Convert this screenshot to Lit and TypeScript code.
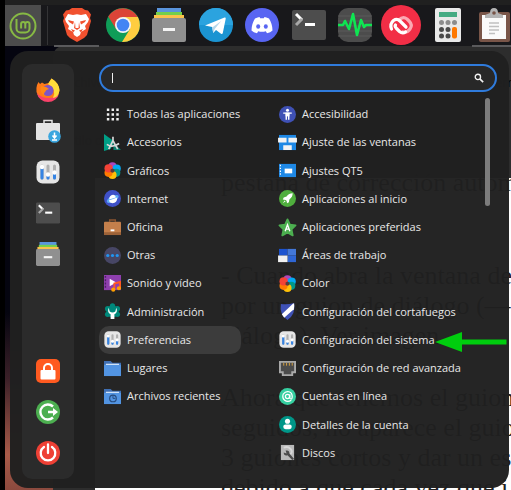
import { LitElement, html, css, svg, nothing, SVGTemplateResult } from "lit";
import { customElement, property } from "lit/decorators.js";

type Art = { box: number; art: SVGTemplateResult };

const sliders = svg`<rect x=".5" y=".5" width="23" height="23" rx="6" fill="#e6e6e6"/>
  <g stroke-width="3" stroke-linecap="round"><path d="M6 6v12M12 6v12M18.500 6v12" stroke="#b0b0b0"/>
  <path d="M6 8v10M12 16v2M18.500 14v4" stroke="#3584e4"/></g>
  <g fill="#fff"><circle cx="6" cy="7" r="2.200"/><circle cx="12" cy="14.500" r="2.200"/><circle cx="18.500" cy="12.500" r="2.200"/></g>`;
const terminal = svg`<rect y="2" width="34" height="30" rx="2" fill="#4d4d4d"/>
  <path d="M4 6l6 6" stroke="#fff" stroke-width="3" fill="none"/><path d="M10 11l-6 6" stroke="#a8a8a8" stroke-width="3"/>
  <rect x="13" y="15" width="10" height="3" fill="#fff"/>`;
const cabinet = svg`<path d="M5 0h24v6H5z" fill="#5a95dd"/><path d="M4 4h26v5H4z" fill="#73cf4c"/>
  <path d="M2 7h30v6H2z" fill="#fbc24a"/><rect y="10" width="34" height="24" rx="2" fill="#909090"/>
  <rect x="11" y="20" width="12" height="3" fill="#f4f4f4"/>`;
const petals = svg`<circle cx="9" cy="4.500" r="4.300" fill="#ab47bc"/><circle cx="13.500" cy="7" r="4.300" fill="#03a9f4"/>
  <circle cx="13" cy="11.500" r="4.300" fill="#009688"/><circle cx="9" cy="13.700" r="4.300" fill="#ffc107"/>
  <circle cx="4.800" cy="11.500" r="4.300" fill="#ff7a00"/><circle cx="4.800" cy="6.800" r="4.300" fill="#f44336"/>
  <path d="M9 7l2 1v2.500L9 11.500l-2-1V8z" fill="#5a3a3a"/>`;
const folder = svg`<path d="M0 1h7l2 2h9v5H0z" fill="#3f6fb3"/><path d="M2 4h14v3H2z" fill="#fff"/><path d="M0 5h18v12H0z" fill="#5294e2"/>`;

const ART: Record<string, Art> = {
  mint: { box: 28, art: svg`<circle cx="14" cy="14" r="12.500" fill="none" stroke="#87b944" stroke-width="2"/>
    <path d="M7.500 7v9.500a4 4 0 0 0 4 4h5a4 4 0 0 0 4-4V12a2.100 2.100 0 0 0-4.200 0V16.500M16.300 12a2.100 2.100 0 0 0-4.200 0V16.500" fill="none" stroke="#87b944" stroke-width="2"/>` },
  brave: { box: 34, art: svg`<path d="M9 2l3-2h10l3 2 3 .5 3 4-1 3.500 1 3-4 14-3 3-7 4-7-4-3-3L3 13l1-3-1-3.500 3-4z" fill="#f1512f"/>
    <path d="M8 6l5 1 4-.800 4 .800 5-1 3 5-1 3-3 4 1 3-5 3-1 3-3 2-3-2-1-3-5-3 1-3-3-4-1-3z" fill="#fff"/>
    <path d="M8 12l6 1.500-1 3-4-2.500zM26 12l-6 1.500 1 3 4-2.500zM15 14l-1 6 3 2 3-2-1-6M11 21l4 1.500-2 2zM23 21l-4 1.500 2 2z" fill="#f1512f"/><path d="M15 14h4l-.5 6h-3z" fill="#fff"/>` },
  chrome: { box: 34, art: svg`<circle cx="17" cy="17" r="17" fill="#0f9d58"/>
    <path d="M2.300 8.500L10 21l7-12h14.700A17 17 0 0 0 2.300 8.500z" fill="#db4437"/>
    <path d="M17 9h14.900A17 17 0 0 1 17 34h-1l8-13z" fill="#ffcd40"/><circle cx="17" cy="17" r="8" fill="#f4f4f4"/><circle cx="17" cy="17" r="6.300" fill="#4285f4"/>` },
  cabinet: { box: 34, art: cabinet },
  telegram: { box: 34, art: svg`<circle cx="17" cy="17" r="17" fill="#1b94d2"/><path d="M0 17a17 17 0 0 1 34 0z" fill="#2ba3df"/>
    <path d="M6 17.500L25.500 9.500q1.500-.3 1.200 1.300L23.800 25q-.4 1.500-1.800.7L17 22l-2.800 3-1-6z" fill="#fff"/><path d="M13.200 19.500l9-6.500-6.500 8-1.500 4z" fill="#b5d7ea"/>` },
  discord: { box: 34, art: svg`<circle cx="17" cy="17" r="17" fill="#5865f2"/>
    <path d="M10 10.500q3-1.500 4.500-1.500l.7 1.300q1.800-.3 3.600 0l.7-1.300q1.500 0 4.500 1.500 3.500 5.500 3.500 12-2 2-5.500 2.700l-1.200-2q-3.800 1-7.600 0l-1.200 2q-3.500-.7-5.500-2.700 0-6.500 3.500-12z" fill="#fff"/>
    <ellipse cx="13.200" cy="18.500" rx="2" ry="2.300" fill="#5865f2"/><ellipse cx="20.800" cy="18.500" rx="2" ry="2.300" fill="#5865f2"/>` },
  terminal: { box: 34, art: terminal },
  monitor: { box: 34, art: svg`<rect width="34" height="34" rx="10" fill="#4c4c4c"/>
    <path d="M0 8h34M0 13h34M0 18h34M0 23h34M0 28h34" stroke="#5a5a5a"/>
    <path d="M0 17h5l2-4 4 8 4-15 4 21 4-15 3 7 2-2h6" fill="none" stroke="#0fe552" stroke-width="2.600" stroke-linejoin="round"/>` },
  authy: { box: 40, art: svg`<circle cx="20" cy="20" r="20" fill="#f22e46"/>
    <g fill="none" stroke-width="3.200" stroke-linecap="round"><path d="M18 15q4-4 8-1l2 2q4 4 1 8-3 4-7 3" stroke="#fba9b3"/>
    <path d="M10.500 24q-2-5 2-8.500 3.500-2.500 6.500.5l6 6M14.500 20q-1 1.500 1 3.500l3 3q3 2.500 6 .5" stroke="#fff"/></g>` },
  calc: { box: 34, art: svg`<rect x="4" width="26" height="34" rx="2" fill="#e9e9e9"/><path d="M8 4h18v5H8z" fill="#45ab83"/>
    <g fill="#8c8c8c"><circle cx="10.500" cy="14.500" r="2.500"/><circle cx="17" cy="14.500" r="2.500"/><circle cx="23.500" cy="14.500" r="2.500"/></g>
    <g fill="#4a4a4a"><circle cx="10.500" cy="21.500" r="2.500"/><circle cx="17" cy="21.500" r="2.500"/><circle cx="10.500" cy="28" r="2.500"/><circle cx="17" cy="28" r="2.500"/></g>
    <rect x="21" y="19" width="5" height="11.500" rx="2" fill="#ff7800"/>` },
  clipboard: { box: 34, art: svg`<rect x="2" y="4" width="31" height="30" rx="2" fill="#795548"/><path d="M5 7h24v24H5z" fill="#fafafa"/>
    <path d="M8 10V7l5-2q0-5 4-5t4 5l5 2v3z" fill="#b4b4b4"/><circle cx="17" cy="5" r="1.800" fill="#795548"/>
    <path d="M12 15h10M12 18.500h10M12 22h10M12 25.500h6" stroke="#c0c0c0" stroke-width="1.500"/>` },
  firefox: { box: 24, art: svg`<path d="M1 7l1.500-3L4 6l2-1.500L8.500 6l4-1L15.500.5Q23 5 23.500 12.500A11.700 11.700 0 0 1 .5 14Q0 10 1 7z" fill="#ff7a1a"/>
    <path d="M.8 15A11.500 11.500 0 0 0 23.300 15Q20 20 13 20 5 20 .8 15z" fill="#f9426a"/>
    <path d="M15.500.5Q23 5 23.500 12 23 19 17 20 21 11 12 6z" fill="#ffdc3a"/><circle cx="12" cy="12.500" r="5.500" fill="#7c55c8"/>
    <path d="M5 8l5 1 3 2q-3 .5-4 3-2 2 0 4-6-3-4-10z" fill="#ff8a16"/>` },
  software: { box: 24, art: svg`<path d="M8 4V1.500h8V4" fill="none" stroke="#e4e4e4" stroke-width="1.500"/><rect y="4" width="24" height="17" rx="1" fill="#e4e4e4"/>
    <circle cx="18.500" cy="17.500" r="6.300" fill="#3aa6df"/><path d="M18.500 13.500v4m-2-1l2 2.500 2-2.500M16 21h5" stroke="#fff" stroke-width="1.500" fill="none"/>` },
  sliders: { box: 24, art: sliders },
  lock: { box: 24, art: svg`<rect width="24" height="24" rx="5" fill="#ff5a20"/><path d="M8 12V9a4 4 0 0 1 8 0v3" fill="none" stroke="#fff" stroke-width="2"/><rect x="4.500" y="11" width="15" height="9.500" rx="1" fill="#fff"/>` },
  logout: { box: 24, art: svg`<circle cx="12" cy="12" r="12" fill="#4caf50"/><path d="M17 6.500a7.500 7.500 0 1 0 0 11M12 12h7" fill="none" stroke="#fff" stroke-width="2.400"/><path d="M17 8l5 4-5 4z" fill="#fff"/>` },
  power: { box: 24, art: svg`<circle cx="12" cy="12" r="12" fill="#ee4035"/><path d="M8 6a7.300 7.300 0 1 0 8 0M12 3.500v8.500" fill="none" stroke="#fff" stroke-width="2.300" stroke-linecap="round"/>` },
  grid: { box: 18, art: svg`<path d="M3 4h13M3 9h13M3 14h13" stroke="#f0f0f0" stroke-width="2.600" stroke-dasharray="2.600 2.400"/>` },
  accessories: { box: 18, art: svg`<path d="M0 0l11 8-4 8-7 2z" fill="#009e86"/><path d="M10 17h8l-8-8z" fill="#0b8070"/><path d="M9.500 3v4L5 16M9.500 7l5 9M3 11q6 4 13-1" stroke="#d7d7d7" stroke-width="1.800" fill="none"/>` },
  petals: { box: 18, art: petals },
  internet: { box: 18, art: svg`<circle cx="9" cy="9" r="9" fill="#3f51c8"/><ellipse cx="9" cy="9.500" rx="7" ry="3" transform="rotate(-28 9 9)" fill="#5ca9f5"/><path d="M5.500 10q0-4.500 4-5 3 .5 3 3z" fill="#fff"/><path d="M5 11l9-3q0 6-5 6-3-.5-4-3z" fill="#fff"/>` },
  office: { box: 18, art: svg`<path d="M6 3V1h6v2" fill="none" stroke="#8b5430" stroke-width="1.500"/><rect y="3" width="18" height="14" rx="1" fill="#c47f4b"/><path d="M0 14h18v3H0z" fill="#9c6238"/><rect x="7" y="11" width="4" height="2" fill="#fff"/>` },
  others: { box: 18, art: svg`<circle cx="9" cy="9" r="9" fill="#474665"/><circle cx="4" cy="9" r="1.700" fill="#2196f3"/><circle cx="9" cy="9" r="1.700" fill="#2196f3"/><circle cx="14" cy="9" r="1.700" fill="#2196f3"/>` },
  media: { box: 18, art: svg`<path d="M0 0h18v16H0z" fill="#8e3fae"/><path d="M1.500 1v14" stroke="#4f1e66" stroke-width="1.500" stroke-dasharray="2 1.500"/><path d="M6 4l7 4-7 4z" fill="#fff"/><path d="M11 15.500V9l6-1.500V14" fill="none" stroke="#ff5722" stroke-width="2"/><circle cx="9.800" cy="15.500" r="2.200" fill="#ffa000"/><circle cx="15.800" cy="14" r="2.200" fill="#ffa000"/>` },
  admin: { box: 18, art: svg`<g fill="#00897b"><circle cx="9" cy="9" r="6.500"/><circle cx="9" cy="3" r="2.800"/><circle cx="3.800" cy="6" r="2.800"/><circle cx="14.200" cy="6" r="2.800"/><circle cx="3.800" cy="12" r="2.800"/><circle cx="14.200" cy="12" r="2.800"/></g><path d="M5 5q-2 5 2 7v5h4v-5q4-2 2-7l-1 4q-3 2-6 0z" fill="#fff"/>` },
  folder: { box: 18, art: folder },
  recent: { box: 18, art: svg`${folder}<circle cx="9.500" cy="11" r="3.500" fill="none" stroke="#274b7d" stroke-width="1.200"/><path d="M9.500 8v3h2.500" stroke="#274b7d" fill="none"/>` },
  access: { box: 18, art: svg`<circle cx="9" cy="9" r="9" fill="#3f51b5"/><circle cx="9" cy="4.500" r="1.600" fill="#fff"/><path d="M4.500 7.500h9M7.700 7.500v7M10.300 7.500v7" stroke="#fff" stroke-width="1.500"/><path d="M7 7h4v4H7z" fill="#fff"/>` },
  windows: { box: 18, art: svg`<path d="M0 1h18v16H0z" fill="#1e88e5"/><path d="M-1 4h9v5h-9zM10 4h9v5h-9zM4.500 12h9v5h-9z" fill="#f2f2f2"/>` },
  qt: { box: 18, art: svg`<path d="M0 2h18v14H0z" fill="#1e88e5"/><path d="M1.500 3v12" stroke="#fff" stroke-width="1.200" stroke-dasharray="1.500 1.500"/><path d="M6 7h8v5H6z" fill="#fff"/>` },
  rocket: { box: 18, art: svg`<circle cx="9" cy="9" r="9" fill="#4fae3d"/><path d="M14.500 3.500q-4 0-6.500 3.500l-3 1L4 10l3 .5 1 1L8.500 14l2-1 .5-3q3.500-2.500 3.500-6.500z" fill="#fff"/><path d="M4 14l2-3 1 1z" fill="#fff"/>` },
  star: { box: 18, art: svg`<path d="M9 .5l2.500 5.500 6 .8-4.300 4.200 1.300 6.300L9 14.200l-5.500 3.100L4.800 11 .5 6.800l6-.8z" fill="#4caf50" stroke="#4caf50" stroke-width="2" stroke-linejoin="round"/><path d="M6.500 13L9 6l2.500 7M7.500 10.700h3" fill="none" stroke="#fff" stroke-width="1.400"/>` },
  spaces: { box: 18, art: svg`<path d="M0 2h9v7H0z" fill="#1c53cf"/><path d="M9 2h9v7H9z" fill="#4377d8"/><path d="M9 9h9v7H9z" fill="#2f66d4"/><path d="M-1 9h10v7H-1z" fill="#f0f0f0"/>` },
  shield: { box: 18, art: svg`<path d="M2 1q7 1 14-1 2 12-7 18Q0 12 2 1z" fill="#3f51b5"/><path d="M3 12L15 .5l1 0q.5 3-.3 6L5.500 15.500z" fill="#fff"/>` },
  network: { box: 18, art: svg`<path d="M0 1h18v13h-3v3H3v-3H0z" fill="#a8a8a8"/><path d="M2 3h14v9h-3v3H5v-3H2z" fill="#4b4b4b"/><path d="M5 3v3M8 3v3M11 3v3M14 3v3" stroke="#d9a441"/>` },
  online: { box: 18, art: svg`<circle cx="9" cy="9" r="9" fill="#36cfa0"/><path d="M13 13q-4 2.500-7 0T4.500 6.500Q7 3 10.500 4t3.500 5-2.500 2V6.500" fill="none" stroke="#fff" stroke-width="1.300"/><circle cx="9" cy="9" r="2.200" fill="none" stroke="#fff" stroke-width="1.300"/>` },
  account: { box: 18, art: svg`<circle cx="9" cy="9" r="9" fill="#009688"/><circle cx="9" cy="5.500" r="2.700" fill="#fff"/><rect x="4.500" y="9" width="9" height="5" rx="2.500" fill="#fff"/>` },
  disks: { box: 18, art: svg`<path d="M2 1h14v16H2z" fill="#b9b9b9"/><path d="M5 4q4-2 7 1t0 6" fill="none" stroke="#d8d8d8" stroke-width="2"/><path d="M7 7q4-1 4 3l5 6-2 1-5-5q-4 1-4-3l3 1z" fill="#4b4b4b"/>` },
  search: { box: 18, art: svg`<circle cx="7" cy="7" r="4.800" fill="none" stroke="#f2f2f2" stroke-width="2.400"/><path d="M10.500 10.500l6 6" stroke="#f2f2f2" stroke-width="3"/>` },
};

@customElement("app-icon")
export class AppIcon extends LitElement {
  @property() name = "";
  static styles = css`
    :host { display: block; flex: none; }
    svg { display: block; width: 100%; height: 100%; overflow: visible; }
  `;
  render() {
    const icon = ART[this.name];
    return icon ? html`<svg viewBox="0 0 ${icon.box} ${icon.box}" aria-hidden="true">${icon.art}</svg>` : nothing;
  }
}

const TASKS = [
  ["brave", "Brave"], ["chrome", "Chrome"], ["cabinet", "Archivos"], ["telegram", "Telegram"], ["discord", "Discord"],
  ["terminal", "Terminal"], ["monitor", "Monitor"], ["authy", "Authy"], ["calc", "Calculadora"], ["clipboard", "Portapapeles"],
];
const FAVORITES = [["firefox", "Firefox"], ["software", "Software"], ["sliders", "Configuración"], ["terminal", "Terminal"], ["cabinet", "Archivos"]];
const SESSION = [["lock", "Bloquear"], ["logout", "Cerrar sesión"], ["power", "Apagar"]];
const CATEGORIES = [
  ["grid", "Todas las aplicaciones"], ["accessories", "Accesorios"], ["petals", "Gráficos"], ["internet", "Internet"],
  ["office", "Oficina"], ["others", "Otras"], ["media", "Sonido y vídeo"], ["admin", "Administración"],
  ["sliders", "Preferencias"], ["folder", "Lugares"], ["recent", "Archivos recientes"],
];
const APPS = [
  ["access", "Accesibilidad"], ["windows", "Ajuste de las ventanas"], ["qt", "Ajustes QT5"], ["rocket", "Aplicaciones al inicio"],
  ["star", "Aplicaciones preferidas"], ["spaces", "Áreas de trabajo"], ["petals", "Color"], ["shield", "Configuración del cortafuegos"],
  ["sliders", "Configuración del sistema"], ["network", "Configuración de red avanzada"], ["online", "Cuentas en línea"],
  ["account", "Detalles de la cuenta"], ["disks", "Discos"],
];

@customElement("app-root")
export class AppRoot extends LitElement {
  static styles = css`
    :host {
      display: flex; flex-direction: column; position: relative; min-height: 100vh; box-sizing: border-box;
      overflow: hidden; isolation: isolate; padding-left: 5px; background: #000; color: #e8e8e8;
      font: 11px/16px "Open Sans", "Noto Sans", sans-serif;
    }
    button { border: 0; margin: 0; padding: 0; background: none; color: inherit; font: inherit; display: flex; align-items: center; }
    .taskbar { display: flex; height: 41px; border-top: 5px solid #202020; background: #18181b; flex: none; }
    .start { width: 36px; justify-content: center; background: #4c4c4c; }
    .start app-icon { width: 28px; height: 28px; }
    .divider { width: 1px; margin: 1px 6px 1px; background: #343436; }
    .tasks { flex: 1; display: grid; grid-template-columns: repeat(10, 1fr); margin-right: -7px; }
    .task { justify-content: center; border-bottom: 2px solid transparent; margin-right: 1px; }
    .task.open { border-color: #5a5a5c; }
    .task app-icon { width: 34px; height: 34px; }
    .task .authy { width: 40px; height: 40px; }

    .backdrop { position: absolute; inset: 46px 0 0 5px; z-index: -1; overflow: hidden; display: flex;
      background: linear-gradient(#050510 0 60%, #3b2028 75%, #a85a48 92%, #8c4a3e); }
    .window { flex: 1; min-width: 0; margin-left: 48px; border-radius: 10px 0 0; background: #2d2d2d; overflow: hidden; white-space: nowrap; }
    .menubar, .style { display: flex; gap: 14px; padding: 27px 0 0 9px; height: 20px; font-size: 12px; line-height: 20px; color: #000; }
    .style { padding-top: 38px; height: 37px; }
    .page { margin-left: 42px; padding-left: 126px; background: linear-gradient(#2d2d2d 10px, #fff 10px); color: #222; font: 26px/30px "Liberation Serif", serif; }
    .page p { margin: 0 0 32px; }
    .page .first { margin-bottom: 63px; }

    .menu { flex: 1; display: flex; gap: 25px; margin: 5px 2px 2px 5px; padding: 13px 12px 9px; border-radius: 18px; background: rgba(32, 32, 32, 0.975); }
    .side { width: 52px; display: flex; flex-direction: column; align-items: stretch; padding: 5px 0 6px; border-radius: 10px; background: #2b2b2b; box-sizing: border-box; }
    .side button { height: 41px; justify-content: center; }
    .side app-icon { width: 24px; height: 24px; }
    .grow { flex: 1; }
    .main { flex: 1; min-width: 0; display: flex; flex-direction: column; }
    .search { display: flex; align-items: center; height: 28px; box-sizing: border-box; border: 2px solid #2f7bdc; border-radius: 14px; padding: 0 11px; background: #282828; }
    .caret { width: 1px; height: 10px; background: #f0f0f0; }
    .search input { flex: 1; min-width: 0; border: 0; outline: 0; padding: 0; background: none; color: inherit; font: inherit; }
    .search app-icon { width: 10px; height: 10px; }
    .lists { flex: 1; display: grid; grid-template-columns: 142px minmax(0, 1fr) 5px; margin: 8px 7px 12px 0; }
    .list { display: grid; grid-template: repeat(13, minmax(28px, 1fr)) / minmax(0, 1fr); }
    .apps { margin-left: 33px; }
    .item { position: relative; gap: 6px; padding: 0 5px; border-radius: 10px; white-space: nowrap; text-align: left; }
    .item app-icon { width: 17px; height: 17px; }
    .item.selected { background: #3c3c3c; }
    .thumb { height: 108px; margin-top: -2px; border-radius: 3px; background: #7c7c7c; }
    .arrow { position: absolute; left: 161px; top: 6px; width: 72px; height: 20px; }
  `;

  private icons(list: string[][]) {
    return list.map(([icon, label]) => html`<button aria-label=${label}><app-icon name=${icon}></app-icon></button>`);
  }

  render() {
    return html`
      <div class="backdrop" aria-hidden="true">
        <div class="window">
          <div class="menubar"><span>Archivo</span><span>Editar</span><span>Ver</span><span>Insertar</span><span>Formato</span><span>Estilos</span><span>Tabla</span><span>Formulario</span><span>Herramientas</span></div>
          <div class="style">Estilo de</div>
          <div class="page">
            <p class="first">pestaña de corrección autom</p>
            <p>- Cuando abra la ventana de<br />por un guion de diálogo (—<br />diálogo). Ver imagen</p>
            <p>Ahora que tenemos el guion<br />seguidos, no aparece el guio<br />3 guiones cortos y dar un es<br />debido a que cada vez que i</p>
          </div>
        </div>
      </div>
      <nav class="taskbar">
        <button class="start" aria-label="Menú"><app-icon name="mint"></app-icon></button>
        <div class="divider"></div>
        <div class="tasks">
          ${TASKS.map(([icon, label]) => html`<button class="task ${icon === "brave" || icon === "clipboard" ? "open" : ""}" aria-label=${label}><app-icon class=${icon} name=${icon}></app-icon></button>`)}
        </div>
      </nav>
      <section class="menu">
        <div class="side">${this.icons(FAVORITES)}<div class="grow"></div>${this.icons(SESSION)}</div>
        <div class="main">
          <label class="search"><span class="caret"></span><input type="text" aria-label="Buscar" /><app-icon name="search"></app-icon></label>
          <div class="lists">
            <div class="list">
              ${CATEGORIES.map(([icon, label]) => html`<button class="item ${label === "Preferencias" ? "selected" : ""}"><app-icon name=${icon}></app-icon>${label}</button>`)}
            </div>
            <div class="list apps">
              ${APPS.map(([icon, label]) => html`<button class="item"><app-icon name=${icon}></app-icon>${label}${label === "Configuración del sistema"
                ? html`<svg class="arrow" viewBox="0 0 72 20" aria-hidden="true"><path d="M0 10L27 0v7.500h44.500v5H27V20z" fill="#00cd0e"/></svg>` : nothing}</button>`)}
            </div>
            <div class="thumb"></div>
          </div>
        </div>
      </section>
    `;
  }
}
